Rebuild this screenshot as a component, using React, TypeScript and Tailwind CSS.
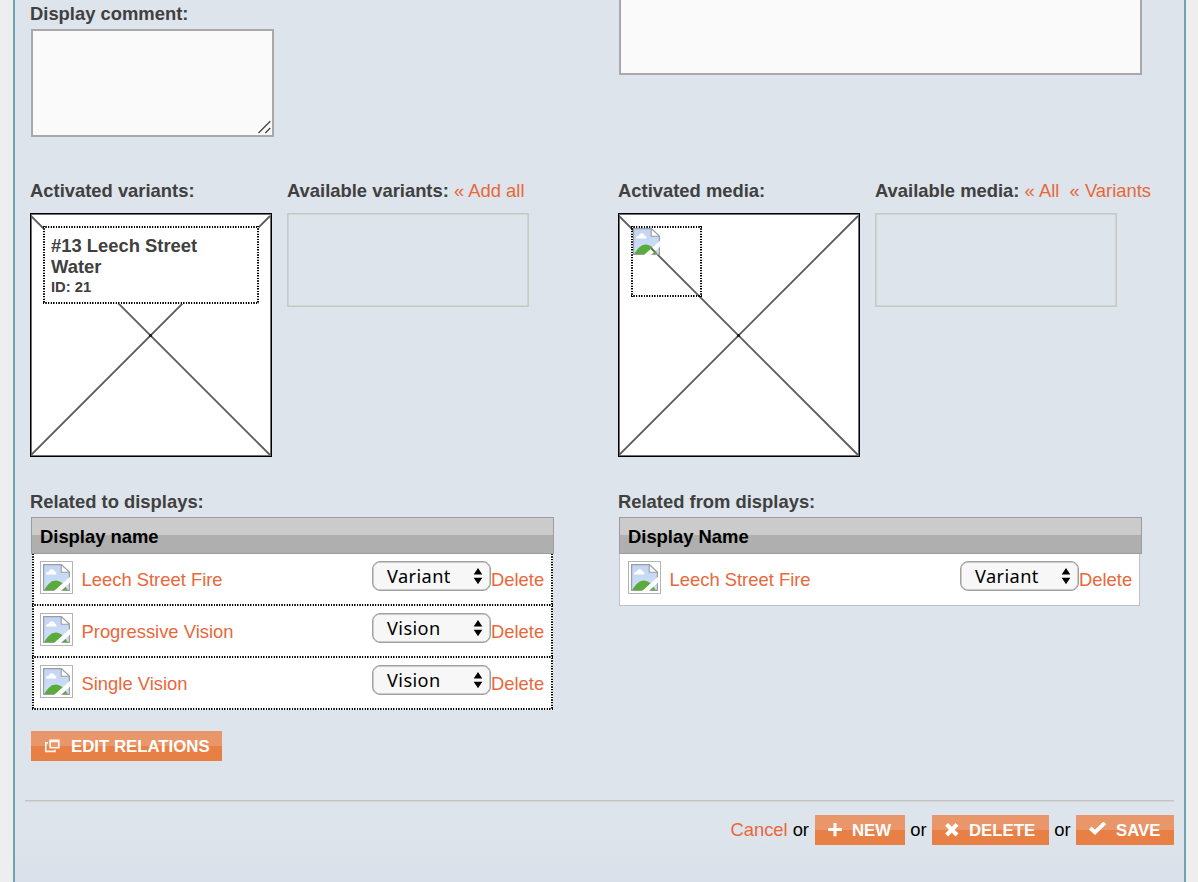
import React from "react";

const dotted =
  "[background-image:repeating-linear-gradient(90deg,#000_0,#000_0.8px,transparent_1.4px,transparent_2.2px,#000_2.6px),repeating-linear-gradient(90deg,#000_0,#000_0.8px,transparent_1.4px,transparent_2.2px,#000_2.6px),repeating-linear-gradient(180deg,#000_0,#000_0.8px,transparent_1.4px,transparent_2.2px,#000_2.6px),repeating-linear-gradient(180deg,#000_0,#000_0.8px,transparent_1.4px,transparent_2.2px,#000_2.6px)] [background-position:top,bottom,left,right] bg-no-repeat";

const allSides = " [background-size:100%_2px,100%_2px,2px_100%,2px_100%]";
const openTop = " [background-size:0_0,100%_2px,2px_100%,2px_100%]";

function BrokenImage({ id }: { id: string }) {
  return (
    <svg width="27" height="27" viewBox="0 0 27 27" className="block shrink-0">
      <defs>
        <linearGradient id={id + "g"} x1="0" y1="0" x2="0" y2="1">
          <stop offset="0" stopColor="#c3d5f4" />
          <stop offset="1" stopColor="#cfdffa" />
        </linearGradient>
        <mask id={id + "m"}>
          <rect width="27" height="27" fill="#fff" />
          <path d="M27 12.8 11 27H18L27 18.6Z" fill="#000" />
        </mask>
      </defs>
      <g mask={`url(#${id}m)`}>
        <path d="M.6.6H18.2L26.4 8.2V26.4H.6Z" fill={`url(#${id}g)`} stroke="#9a9da1" strokeWidth="1.2" />
        <path d="M3 10.6C2.8 8.5 4.5 7.5 5.9 7.8 6.8 4.5 10.9 4.7 11.4 7.4 13.3 7.5 14 9.3 13 10.6Z" fill="#fff" />
        <path d="M1.3 26C4.5 19.8 9 16.5 13 16.5S21.5 20 24.5 26Z" fill="#5aab3c" />
        <path d="M18.2.6V8.2H26.4Z" fill="#fff" stroke="#9a9da1" strokeWidth="1.1" />
      </g>
    </svg>
  );
}

function Label({ children }: { children: React.ReactNode }) {
  return <div className="h-[24px] whitespace-nowrap pt-[1px] text-[18.4px] font-bold leading-[24px] text-[#404040]">{children}</div>;
}

function Link({ children, className = "" }: { children: React.ReactNode; className?: string }) {
  return (
    <a href="#" className={"font-normal text-[#e8683a] " + className}>
      {children}
    </a>
  );
}

function DropArea({ children }: { children: React.ReactNode }) {
  return (
    <div className="relative h-[244px] w-[242px] border border-black bg-white shadow-[inset_0_0_0_1px_#707070]">
      <svg className="absolute inset-0" width="240" height="242" viewBox="0 0 240 242">
        <path d="M0 2 239 241M0 241 239 2" stroke="#5c5c5c" strokeWidth="1.8" />
        <circle cx="119.5" cy="121.5" r="1.5" fill="#111" />
      </svg>
      <div className="relative pl-[12px] pt-[12px]">{children}</div>
    </div>
  );
}

function EmptyArea() {
  return <div className="mt-[11px] h-[94px] w-[242px] border border-[#c9c9c9] shadow-[inset_0_0_0_1px_#d0d2d3]" />;
}

function Select({ value }: { value: string }) {
  return (
    <button className="flex h-[30px] w-[119px] items-center justify-between rounded-[8px] border border-[#a0a0a0] bg-[#f7f7f7] pl-[14px] pr-[7px] font-['Noto_Sans',sans-serif] text-[18.2px] leading-[28px] tracking-[0.4px] text-black shadow-[inset_0_0_0_0.5px_#a0a0a0]">
      <span>{value}</span>
      <svg width="10" height="18" viewBox="0 0 10 18">
        <path d="M5 1 9.3 7.6H.7ZM5 17.3 9.3 10.7H.7Z" fill="#000" />
      </svg>
    </button>
  );
}

function Row({ id, name, kind }: { id: string; name: string; kind: string }) {
  return (
    <div className="flex h-full items-start pl-[8px] pt-[7px]">
      <div className="flex size-[33px] shrink-0 items-center justify-center border border-[#b4b4b4] bg-white">
        <BrokenImage id={id} />
      </div>
      <Link className="ml-[8.5px] mt-[7px] w-[290.5px] text-[18.4px] leading-[24px]">{name}</Link>
      <Select value={kind} />
      <Link className="mt-[7px] text-[18.4px] leading-[24px]">{"Delete"}</Link>
    </div>
  );
}

function TableHead({ children }: { children: React.ReactNode }) {
  return (
    <div className="h-[37px] w-[523px] border border-[#9c9c9c] bg-[linear-gradient(#cbcbcb_0_50%,#afafaf_50%)] pl-[8px] pt-[1px] text-[18.4px] font-bold leading-[36px] text-black">
      {children}
    </div>
  );
}

function ActionButton({ icon, children, className }: { icon: React.ReactNode; children: string; className: string }) {
  return (
    <button
      className={
        "flex h-[30px] shrink-0 items-center bg-[linear-gradient(#e8966a_0_50%,#e88045_50%)] pl-[13px] text-[16.8px] font-bold leading-[30px] text-white " +
        className
      }
    >
      {icon}
      <span className="whitespace-nowrap pt-[2px]">{children}</span>
    </button>
  );
}

const related = [
  { id: "fire", name: "Leech Street Fire", kind: "Variant" },
  { id: "prog", name: "Progressive Vision", kind: "Vision" },
  { id: "single", name: "Single Vision", kind: "Vision" },
];

export default function App() {
  return (
    <div className="h-[882px] w-[1198px] overflow-hidden bg-[#eee] pl-[13px] font-['Liberation_Sans',Arial,sans-serif] text-[18.4px]">
      <div className="h-full w-[1173px] border-x-2 border-[#6aa5b3] bg-[linear-gradient(#dde4eb_0_95%,#d9e0e9)]">
        <section className="flex h-[178px] pl-[15px]">
          <div className="w-[588px] pt-[1px]">
            <Label>Display comment:</Label>
            <div className="ml-[1px] mt-[4px] flex h-[108px] w-[243px] items-end justify-end border-2 border-[#a9a9a9] bg-[#fafafa]">
              <svg width="16" height="16" viewBox="0 0 16 16">
                <path d="M2.5 14 14.3 2.2M9.3 14 14.3 9" stroke="#444" strokeWidth="1.3" />
              </svg>
            </div>
          </div>
          <div className="ml-[1px] h-[75px] w-[523px] border-2 border-t-0 border-[#a9a9a9] bg-[#fafafa]" />
        </section>

        <section className="flex h-[311px] pl-[15px]">
          <div className="w-[257px]">
            <Label>Activated variants:</Label>
            <div className="mt-[11px]">
              <DropArea>
                <div
                  className={"h-[78px] w-[216px] bg-white pl-[8px] pr-[20px] pt-[10px] font-bold leading-[20.5px] text-[#404040] " + dotted + allSides}
                >
                  <div>#13 Leech Street Water</div>
                  <div className="text-[14.8px]">ID: 21</div>
                </div>
              </DropArea>
            </div>
          </div>
          <div className="w-[331px]">
            <Label>
              Available variants: <Link>« Add all</Link>
            </Label>
            <EmptyArea />
          </div>
          <div className="w-[257px]">
            <Label>Activated media:</Label>
            <div className="mt-[11px]">
              <DropArea>
                <div className={"size-[71px] pl-[2px] pt-[2px] " + dotted + allSides}>
                  <BrokenImage id="media" />
                </div>
              </DropArea>
            </div>
          </div>
          <div>
            <Label>
              Available media: <Link>« All</Link>&nbsp; <Link>« Variants</Link>
            </Label>
            <EmptyArea />
          </div>
        </section>

        <section className="flex h-[311px] pl-[15px]">
          <div className="w-[588px]">
            <Label>Related to displays:</Label>
            <div className="ml-[1px] mt-[4px]">
              <TableHead>Display name</TableHead>
              <div className={"ml-[1px] h-[156px] w-[521px] bg-white " + dotted + openTop}>
                {related.map((r, i) => (
                  <div
                    key={r.id}
                    className={
                      i < 2
                        ? "h-[52px] bg-no-repeat [background-image:repeating-linear-gradient(90deg,#000_0,#000_0.8px,transparent_1.4px,transparent_2.2px,#000_2.6px)] [background-position:bottom] [background-size:100%_2px]"
                        : "h-[52px]"
                    }
                  >
                    <Row {...r} />
                  </div>
                ))}
              </div>
            </div>
            <ActionButton
              className="ml-[1px] mt-[21px] w-[191px]"
              icon={
                <svg width="27" height="16" viewBox="0 0 27 16" className="shrink-0">
                  <path d="M6.2 2.4h8.6v7.2H6.2ZM6.2 3.4h8.6" fill="none" stroke="#fff" strokeWidth="1.8" opacity=".9" />
                  <path d="M4 4.8H1.8v8.6H11V11.8" fill="none" stroke="#fff" strokeWidth="1.7" opacity=".9" />
                </svg>
              }
            >
              EDIT RELATIONS
            </ActionButton>
          </div>
          <div>
            <Label>Related from displays:</Label>
            <div className="ml-[1px] mt-[4px]">
              <TableHead>Display Name</TableHead>
              <div className="h-[52px] w-[521px] border border-t-0 border-[#c0c2c3] bg-white">
                <Row id="from" name="Leech Street Fire" kind="Variant" />
              </div>
            </div>
          </div>
        </section>

        <footer className="ml-[10px] flex h-[45px] w-[1149px] items-end justify-end border-t border-[#c6c4c3] leading-[30px] text-black shadow-[inset_0_1px_0_#d3d6d9]">
          <Link>Cancel</Link>
          <span className="ml-[5px] mr-[6px]">or</span>
          <ActionButton
            className="w-[90px]"
            icon={
              <svg width="24" height="16" viewBox="0 0 24 16" className="shrink-0">
                <path d="M7 1V14.2M.2 7.6H13.8" stroke="#fff" strokeWidth="3" />
              </svg>
            }
          >
            NEW
          </ActionButton>
          <span className="w-[27px] text-center">or</span>
          <ActionButton
            className="w-[117px]"
            icon={
              <svg width="24" height="16" viewBox="0 0 24 16" className="shrink-0">
                <path d="M1.6 2.4 12 13M12 2.4 1.6 13" stroke="#fff" strokeWidth="4.2" />
              </svg>
            }
          >
            DELETE
          </ActionButton>
          <span className="w-[27px] text-center">or</span>
          <ActionButton
            className="w-[98px]"
            icon={
              <svg width="27" height="16" viewBox="0 0 27 16" className="shrink-0">
                <path d="M1.2 6 6 10.4 15.8.8" fill="none" stroke="#fff" strokeWidth="3.8" />
              </svg>
            }
          >
            SAVE
          </ActionButton>
        </footer>
      </div>
    </div>
  );
}
